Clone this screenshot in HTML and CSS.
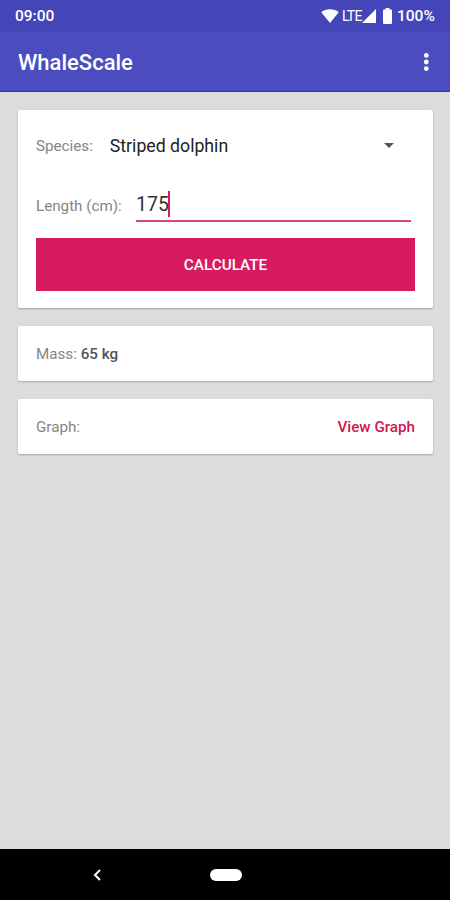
FILE: index.html
```html
<!DOCTYPE html>
<html lang="en">
<head>
    <meta charset="UTF-8">
    <meta name="viewport" content="width=device-width, initial-scale=1.0">
    <title>WhaleScale</title>
    <link rel="stylesheet" href="styles.css">
</head>
<body>
    <div class="status-bar">
        <span class="time">09:00</span>
        <svg class="wifi" width="18" height="14" viewBox="0 0 18 14"><path d="M9 14L0.3 3.2C5 -0.6 13 -0.6 17.7 3.2Z"/></svg>
        <span class="network">LTE</span>
        <svg class="signal" width="14" height="14" viewBox="0 0 14 14"><path d="M14 0V14H0Z"/></svg>
        <svg class="battery" width="9" height="16" viewBox="0 0 9 16"><path d="M2.5 0H6.5V1.6H8Q9 1.6 9 2.6V15Q9 16 8 16H1Q0 16 0 15V2.6Q0 1.6 1 1.6H2.5Z"/></svg>
        <span class="percent">100%</span>
    </div>
    <header class="app-bar">
        <h1>WhaleScale</h1>
        <svg width="6" height="20" viewBox="0 0 6 20"><circle cx="3.3" cy="3.4" r="2.4"/><circle cx="3.3" cy="10" r="2.4"/><circle cx="3.3" cy="16.6" r="2.4"/></svg>
    </header>
    <main class="content">
        <section class="card form">
            <div class="row species">
                <span class="label">Species:</span>
                <span class="value">Striped dolphin</span>
                <svg width="10" height="5" viewBox="0 0 10 5"><path d="M0 0H10L5 5Z"/></svg>
            </div>
            <div class="row length">
                <span class="label">Length (cm):</span>
                <div class="input"><span>175</span><i class="cursor"></i></div>
            </div>
            <button class="calculate">CALCULATE</button>
        </section>
        <section class="card result">
            <span class="label">Mass: <b>65 kg</b></span>
        </section>
        <section class="card result">
            <span class="label">Graph:</span>
            <a class="view-graph">View Graph</a>
        </section>
    </main>
    <nav class="nav-bar">
        <svg width="8" height="12" viewBox="0 0 8 12"><path d="M7 1L2 6L7 11"/></svg>
        <span class="home"></span>
    </nav>
</body>
</html>
```
FILE: styles.css
```css
* {
    box-sizing: border-box;
}
body {
    display: flex;
    flex-direction: column;
    height: 900px;
    margin: 0;
    font-family: Roboto, "Liberation Sans", sans-serif;
    background-color: #DCDCDC;
    overflow: hidden;
}
.status-bar {
    display: flex;
    align-items: center;
    height: 32px;
    padding: 0 15px;
    background-color: #4345B8;
    color: #FFF;
    fill: #FFF;
    font-size: 15.5px;
}
.time {
    font-weight: 500;
    margin-right: auto;
}
.wifi {
    margin-right: 3px;
    margin-top: -1px;
}
.network {
    width: 20px;
    font-size: 14px;
    letter-spacing: -0.8px;
}
.battery {
    margin: 0 5px 0 7px;
}
.percent {
    font-weight: 500;
    width: 38px;
    white-space: nowrap;
}
.app-bar {
    display: flex;
    align-items: center;
    justify-content: space-between;
    height: 60px;
    padding: 0 21px 0 18px;
    background-color: #4A4CC0;
    border-bottom: 1px solid #3531AE; /* Darker bottom edge */
    color: #FFF;
    fill: #FFF;
}
h1 {
    margin: 0;
    padding-top: 2px;
    font-size: 22px;
    font-weight: 500;
}
.content {
    flex: 1;
    padding: 18px 17px 0 18px;
}
.card {
    background-color: #FFF;
    border-radius: 2px;
    box-shadow: 0 1px 2px rgba(0, 0, 0, 0.25);
    margin-bottom: 18px;
    padding: 0 18px;
}
.form {
    height: 198px;
}
.row {
    display: flex;
    align-items: center;
}
.label {
    color: #858585;
    font-size: 15.2px;
}
.label b {
    color: #555;
    font-weight: 500;
}
.species {
    height: 72px;
    padding-right: 21px;
}
.value {
    flex: 1;
    margin-left: 17px;
    color: #222;
    font-size: 17.7px;
}
.species svg {
    fill: #555;
    margin-top: -1px;
}
.length {
    height: 56px;
    align-items: flex-start;
    padding-right: 4px;
}
.length .label {
    width: 100px;
    padding-top: 15px;
}
.input {
    display: flex;
    align-items: center;
    flex: 1;
    height: 40px;
    padding-top: 7px;
    border-bottom: 2px solid #DA4A70;
    color: #333;
    font-size: 19.5px;
}
.cursor {
    width: 2px;
    height: 26px;
    margin: -2px 0 0 -1px;
    background-color: #D81B60;
}
.calculate {
    display: block;
    width: 100%;
    height: 53px;
    padding: 0;
    border: none;
    background-color: #D81B60;
    color: #FFF;
    font-family: inherit;
    font-size: 15.3px;
    font-weight: 500;
}
.result {
    display: flex;
    align-items: center;
    justify-content: space-between;
    height: 55px;
}
.view-graph {
    color: #D0174F;
    font-size: 15.2px;
    font-weight: 500;
}
.nav-bar {
    display: flex;
    align-items: center;
    height: 51px;
    padding-left: 93px;
    background-color: #000;
}
.nav-bar path {
    fill: none;
    stroke: #FFF;
    stroke-width: 2;
}
.home {
    width: 32px;
    height: 12px;
    margin-left: 109px;
    border-radius: 6px;
    background-color: #FFF;
}
```
